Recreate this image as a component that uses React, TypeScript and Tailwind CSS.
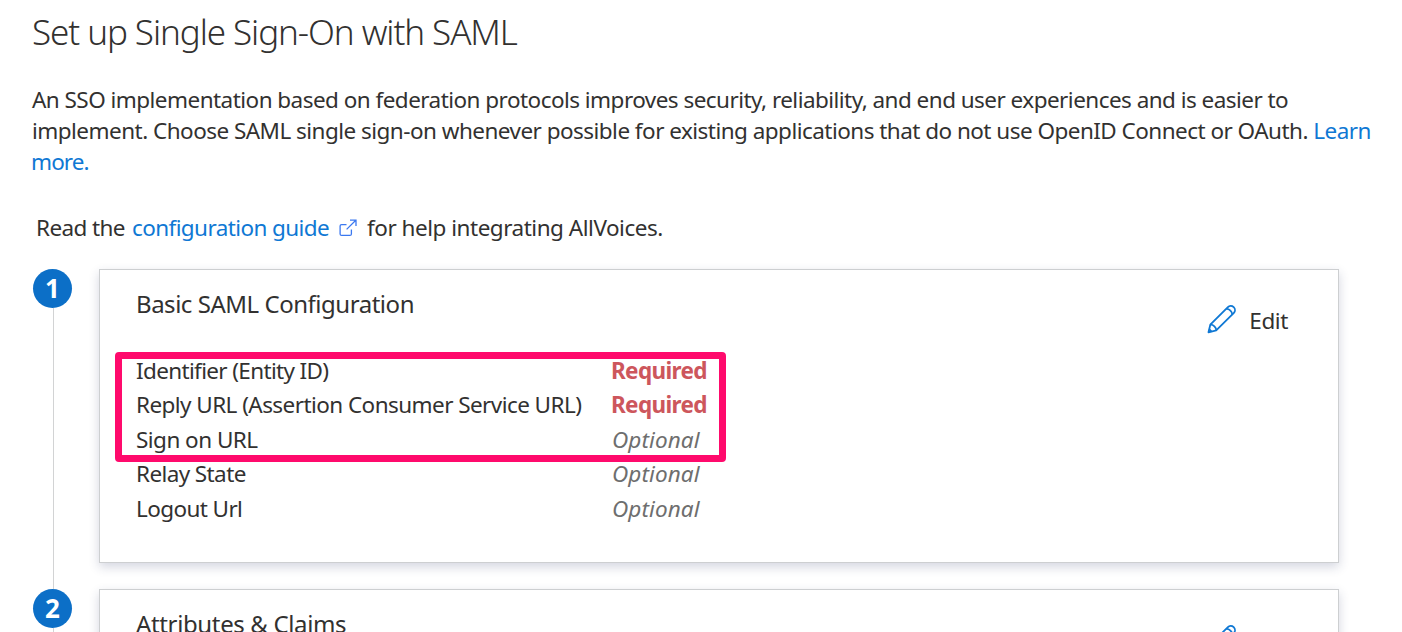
import React from "react";

const basicRows = [
  { name: "Identifier (Entity ID)", value: "Required", spacing: "tracking-[-0.65px]" },
  {
    name: "Reply URL (Assertion Consumer Service URL)",
    value: "Required",
    spacing: "tracking-[-0.56px]",
  },
  { name: "Sign on URL", value: "Optional", spacing: "tracking-[-0.53px]" },
  { name: "Relay State", value: "Optional", spacing: "tracking-[-0.6px]" },
  { name: "Logout Url", value: "Optional", spacing: "tracking-[-0.6px]" },
];

const PencilIcon = () => (
  <svg
    className="w-[30px] h-[30px] -mt-1"
    viewBox="0 0 30 30"
    fill="none"
    stroke="#0f78d4"
    strokeWidth="1.8"
    strokeLinejoin="round"
  >
    <path d="M1.5 28.3 3.3 20.7 20.9 3.1C22.2 1.8 24.8 1.4 26.7 3.2 28.5 5 28.2 7.5 26.9 8.8L9.2 26.4Z" />
    <path d="M3.3 20.7C6 20.3 9.7 23.7 9.2 26.4M19.2 4.9C22.1 4.5 25.5 7.8 25.2 10.5M2.2 25.2 4.6 27.6" />
  </svg>
);

const ExternalIcon = () => (
  <svg
    className="w-[18px] h-[18px]"
    viewBox="0 0 18 18"
    fill="none"
    stroke="#3b78f0"
    strokeWidth="1.3"
  >
    <path d="M7.5 5.6H2.6Q1.1 5.6 1.1 7.1V14.9Q1.1 16.4 2.6 16.4H10.9Q12.4 16.4 12.4 14.9V10.5" />
    <path d="M7.6 10.4 16.8 1.2M11 1.1H17V7.1" />
  </svg>
);

const Step = ({ number, last, children }: any) => (
  <div className="flex">
    <div className="w-[39px] shrink-0 flex flex-col">
      <div className="w-[39px] h-[39px] shrink-0 rounded-full bg-[#0c6fc7] text-white text-[26px] leading-[38px] font-bold text-center">
        {number}
      </div>
      <div className="w-px grow ml-5 bg-[#d2d3d4]" />
    </div>
    <section
      className={
        last
          ? "ml-[27px] w-[1240px] h-[294px] bg-white border border-[#cdcfd1] shadow-[0_4px_10px_rgba(40,50,100,0.2)]"
          : "ml-[27px] w-[1240px] h-[294px] mb-[26px] bg-white border border-[#cdcfd1] shadow-[0_4px_10px_rgba(40,50,100,0.2)]"
      }
    >
      {children}
    </section>
  </div>
);

const CardHeader = ({ title, spacing }: any) => (
  <div className="flex justify-between pl-9 pr-[50px] pt-4">
    <h2 className={`text-[24px] leading-9 whitespace-nowrap ${spacing}`}>
      {title}
    </h2>
    <button className="mt-[18px] h-[34px] flex items-center gap-3">
      <PencilIcon />
      <span className="text-[22.5px] tracking-[-0.4px] leading-[34px]">Edit</span>
    </button>
  </div>
);

const App = () => {
  return (
    <main className="w-[1402px] h-[632px] overflow-hidden bg-white pl-[33px] text-[#323130] font-['Noto_Sans','Open_Sans',sans-serif]">
      <h1 className="-ml-px pt-[9px] text-[35px] leading-[46px] font-light tracking-[-1.07px] whitespace-nowrap">
        Set up Single Sign-On with SAML
      </h1>
      <div className="-ml-px mt-[29px] text-[22.5px] leading-[31px] whitespace-nowrap">
        <p className="tracking-[-0.536px]">
          An SSO implementation based on federation protocols improves security,
          reliability, and end user experiences and is easier to
        </p>
        <p className="tracking-[-0.53px]">
          implement. Choose SAML single sign-on whenever possible for existing
          applications that do not use OpenID Connect or OAuth.{" "}
          <a className="text-[#0f78d4]">Learn</a>
        </p>
        <p className="-ml-px tracking-[-0.9px]">
          <a className="text-[#0f78d4]">more.</a>
        </p>
      </div>
      <div className="ml-[3px] mt-[35px] h-[31px] flex items-center text-[22.5px] leading-[31px] whitespace-nowrap">
        <span className="w-[96px] tracking-[-0.6px]">Read the</span>
        <a className="w-[207px] text-[#0f78d4] tracking-[-0.6px]">
          configuration guide
        </a>
        <ExternalIcon />
        <span className="ml-[10px] tracking-[-0.48px]">
          for help integrating AllVoices.
        </span>
      </div>
      <div className="mt-[26px]">
        <Step number={1}>
          <CardHeader
            title="Basic SAML Configuration"
            spacing="tracking-[-0.47px]"
          />
          <div className="relative mt-[15.75px] px-9 text-[22.5px]">
            {basicRows.map((row) => (
              <div
                key={row.name}
                className="flex h-[34.5px] leading-[34.5px] whitespace-nowrap"
              >
                <span className={`w-[475px] ${row.spacing}`}>{row.name}</span>
                {row.value === "Required" ? (
                  <span className="font-bold text-[#cd565c] tracking-[-0.65px]">
                    {row.value}
                  </span>
                ) : (
                  <span className="ml-px italic text-[#6e6e6e] tracking-[0.1px]">
                    {row.value}
                  </span>
                )}
              </div>
            ))}
            {/* highlight around the fields to fill in */}
            <div className="absolute left-[15px] top-[-1.75px] w-[611px] h-[110px] border-[7px] border-[#ff0a6c] rounded-[4px]" />
          </div>
        </Step>
        <Step number={2} last>
          <CardHeader title="Attributes & Claims" spacing="tracking-[-0.36px]" />
        </Step>
      </div>
    </main>
  );
};

export default App;
